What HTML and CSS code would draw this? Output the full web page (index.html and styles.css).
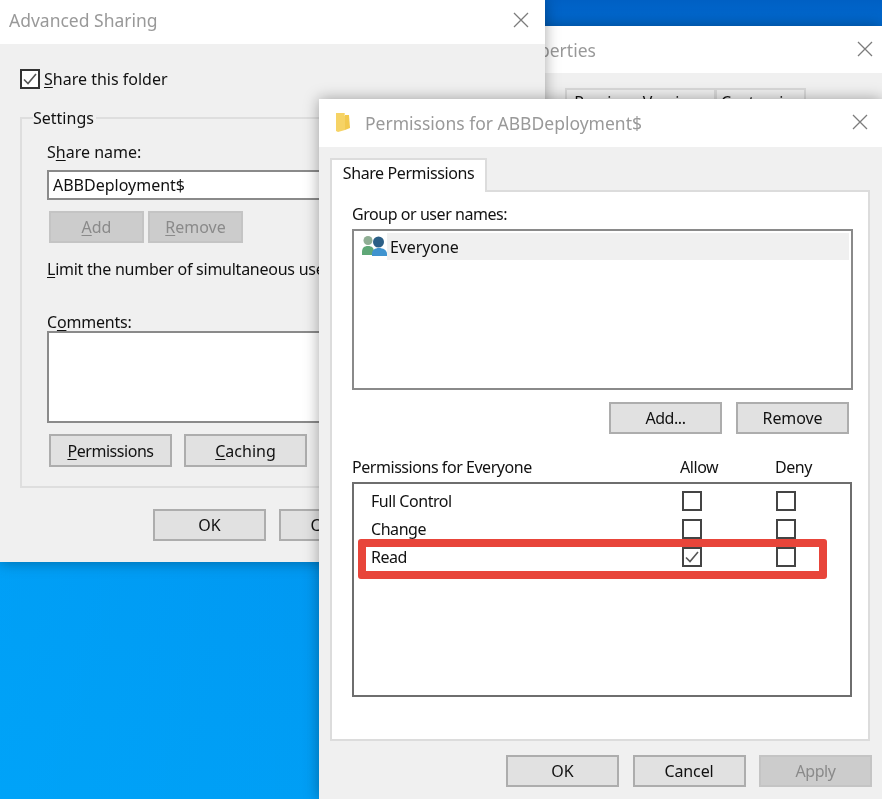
FILE: index.html
```html
<!DOCTYPE html>
<html lang="en">
<head>
<meta charset="utf-8">
<title>Permissions for ABBDeployment$</title>
<link rel="stylesheet" href="styles.css">
</head>
<body>
<main class="desktop">

  <section class="window props">
    <header class="titlebar props-bar">
      <span class="title props-title">ABBDeployment Properties</span>
      <svg class="close" viewBox="0 0 16 16"><path d="M1 1 15 15M15 1 1 15"/></svg>
    </header>
    <div class="props-tabs">
      <span class="props-tab prev">Previous Versions</span>
      <span class="props-tab cust">Customize</span>
    </div>
  </section>

  <section class="window adv">
    <header class="titlebar adv-bar">
      <span class="title">Advanced Sharing</span>
      <svg class="close" viewBox="0 0 16 16"><path d="M1 1 15 15M15 1 1 15"/></svg>
    </header>
    <div class="adv-body">
      <label class="share-row">
        <span class="check dark"><svg viewBox="0 0 20 20"><path d="M4 10.5 8 14.5 16 5"/></svg></span>
        <span><u>S</u>hare this folder</span>
      </label>
      <fieldset class="group">
        <legend>Settings</legend>
        <div class="text-line">S<u>h</u>are name:</div>
        <div class="input">ABBDeployment$</div>
        <div class="btn-row small">
          <span class="btn off"><u>A</u>dd</span>
          <span class="btn off"><u>R</u>emove</span>
        </div>
        <div class="text-line limit"><u>L</u>imit the number of simultaneous users to:</div>
        <div class="text-line comments-label">C<u>o</u>mments:</div>
        <div class="comments"></div>
        <div class="btn-row wide">
          <span class="btn tight"><u>P</u>ermissions</span>
          <span class="btn"><u>C</u>aching</span>
        </div>
      </fieldset>
      <div class="btn-row adv-foot">
        <span class="btn">OK</span>
        <span class="btn">Cancel</span>
      </div>
    </div>
  </section>

  <section class="window perm">
    <header class="titlebar perm-bar">
      <svg class="folder" viewBox="0 0 14 20">
        <path fill="#f6d365" d="M0 1h8l1 2v15l-7 2-2-1z"/>
        <path fill="#fbe08c" d="M8 1h1v3h-1z"/>
        <path fill="#f2c94f" d="M9 3h4l1 13-5 2z"/>
      </svg>
      <span class="title">Permissions for ABBDeployment$</span>
      <svg class="close" viewBox="0 0 16 16"><path d="M1 1 15 15M15 1 1 15"/></svg>
    </header>
    <div class="perm-body">
      <div class="tab">Share Permissions</div>
      <div class="panel">
        <div class="text-line tight">Group or user names:</div>
        <div class="users">
          <div class="user-row">
            <svg class="people" viewBox="0 0 26 24">
              <circle cx="7" cy="5.5" r="4.5" fill="#8fae94"/>
              <path fill="#5fa777" d="M1 20v-3c0-4 2-6 6-6s6 2 6 6v3z"/>
              <circle cx="17.5" cy="7" r="5.5" fill="#2c5f86"/>
              <path fill="#3f93cf" d="M11 21v-2c0-4 3-6 7-6s8 2 8 6v2z"/>
            </svg>
            <span class="user-name plain">Everyone</span>
          </div>
        </div>
        <div class="btn-row user-btns">
          <span class="btn tight">Add...</span>
          <span class="btn plain">Remove</span>
        </div>
        <div class="perm-head tight">
          <span class="perm-head-name">Permissions for Everyone</span>
          <span class="perm-head-allow">Allow</span>
          <span>Deny</span>
        </div>
        <div class="perm-list">
          <div class="perm-row"><span class="tight">Full Control</span><span class="check"></span><span class="check"></span></div>
          <div class="perm-row"><span class="tight">Change</span><span class="check"></span><span class="check"></span></div>
          <div class="perm-row"><span class="tight">Read</span><span class="check"><svg viewBox="0 0 20 20"><path d="M4 10.5 8 14.5 16 5"/></svg></span><span class="check"></span></div>
          <div class="callout"></div>
        </div>
      </div>
      <div class="btn-row perm-foot">
        <span class="btn">OK</span>
        <span class="btn plain">Cancel</span>
        <span class="btn off tight">Apply</span>
      </div>
    </div>
  </section>

</main>
</body>
</html>
```

FILE: styles.css
```css
* { box-sizing: border-box; }
html, body { margin: 0; height: 100%; overflow: hidden; }
body { font: 16px/22px "Noto Sans", "Open Sans", sans-serif; color: #111; }
u { text-underline-offset: 2px; text-decoration-thickness: 1px; }

.desktop {
  position: relative;
  width: 882px;
  height: 799px;
  overflow: hidden;
  filter: blur(0.55px);
  background:
    linear-gradient(90deg, rgba(0, 175, 255, .3), rgba(0, 175, 255, 0) 330px),
    linear-gradient(180deg, #0060c4 0, #006ad0 26px, #0098f2 563px, #009ef5 799px);
}

.window { position: absolute; background: #f0f0f0; box-shadow: 0 0 14px rgba(0, 0, 0, .35); }
.titlebar { position: relative; display: flex; align-items: center; background: #fff; }
.title { color: #999; font-size: 17.5px; }
.close { position: absolute; width: 16px; height: 16px; fill: none; stroke: #7c7c7c; stroke-width: 1.3; }

/* Properties window, mostly hidden */
.props { left: 300px; top: 26px; width: 582px; height: 200px; }
.props-bar { height: 47px; padding-left: 72px; }
.props-title { white-space: nowrap; }
.props-bar .close { left: 557px; top: 15px; }
.props-tabs { display: flex; padding: 15px 0 0 265px; }
.props-tab { height: 40px; padding-top: 1px; border: 2px solid #d9d9d9; border-bottom: 0; text-align: center; }
.prev { width: 151px; }
.cust { width: 91px; margin-left: -1px; }

/* Advanced Sharing */
.adv { left: 0; top: 0; width: 545px; height: 562px; }
.adv-bar { height: 44px; padding: 0 0 4px 9px; }
.adv-bar .close { left: 513px; top: 12px; }
.adv-body { padding: 25px 20px 0; }
.share-row { display: flex; align-items: center; gap: 4px; height: 20px; margin-bottom: 18px; }
.group { margin: 0; padding: 12px 0 20px 25px; height: 381px; border: 2px solid #dedede; }
.group legend { margin-left: -14px; padding: 0 2px 0 0; line-height: 22px; }
.text-line { white-space: nowrap; }
.input {
  width: 470px; height: 30px; margin-top: 7px; padding-left: 4px;
  border: 2px solid #8a8a8a; background: #fff; line-height: 26px;
}
.btn-row { display: flex; }
.btn {
  display: flex; align-items: center; justify-content: center;
  width: 113px; height: 32px;
  background: #e1e1e1; border: 2px solid #adadad; color: #111;
}
.btn.off { background: #cccccc; border-color: #c4c4c4; color: #8a8a8a; }
.small { gap: 4px; margin: 11px 0 0 2px; }
.small .btn { width: 95px; }
.limit { margin-top: 15px; letter-spacing: -.25px; }
.comments-label { margin-top: 32px; line-height: 20px; letter-spacing: -.2px; }
.comments { width: 470px; height: 92px; margin-top: -1px; border: 2px solid #8a8a8a; background: #fff; }
.wide { gap: 12px; margin: 11px 0 0 2px; }
.wide .btn { width: 123px; height: 33px; }
.adv-foot { gap: 13px; margin: 21px 0 0 133px; }

/* Permissions */
.perm { left: 319px; top: 99px; width: 563px; height: 700px; }
.perm-bar { height: 48px; padding: 0 0 0 46px; }
.folder { position: absolute; left: 17px; top: 13px; width: 14px; height: 20px; }
.perm-bar .close { left: 533px; top: 15px; }
.perm-body { padding: 11px 10px 0 11px; }
.tab {
  position: relative; z-index: 1;
  width: 157px; height: 34px; margin-bottom: -2px;
  border: 2px solid #dcdcdc; border-bottom: 0; background: #fff;
  text-align: center; line-height: 27px; letter-spacing: -.4px;
}
.panel { width: 540px; height: 551px; padding: 11px 16px 0 20px; background: #fff; border: 2px solid #dcdcdc; }
.tight { letter-spacing: -.45px; }
.plain { letter-spacing: -.1px; }
.users { width: 501px; height: 161px; margin-top: 4px; padding: 2px; border: 2px solid #8a8a8a; }
.user-row { display: flex; align-items: center; height: 27px; padding-left: 5px; }
.people { flex: none; width: 26px; height: 24px; }
.user-name { flex: 1; align-self: stretch; display: flex; align-items: center; padding-left: 3px; background: #f0f0f0; }
.user-btns { justify-content: flex-end; gap: 14px; margin: 12px 3px 0 0; }
.perm-head { display: flex; margin-top: 22px; white-space: nowrap; }
.perm-head-name { width: 328px; }
.perm-head-allow { width: 95px; }
.perm-list { position: relative; width: 500px; height: 215px; margin-top: 4px; padding: 3px 0 0 17px; border: 2px solid #6e6e6e; }
.perm-row { display: grid; grid-template-columns: 311px 94px 20px; align-items: center; height: 28px; }
.check { display: block; width: 20px; height: 20px; border: 2px solid #444; background: #fff; position: relative; }
.check svg { position: absolute; left: -2px; top: -2px; width: 20px; height: 20px; fill: none; stroke: #555; stroke-width: 1.6; }
.check.dark { border-color: #333; }
.callout {
  position: absolute; left: 4px; top: 55px; width: 469px; height: 40px;
  border: 8px solid #e8453a; border-radius: 3px;
}
.perm-foot { gap: 13.5px; justify-content: flex-end; margin-top: 14px; width: 542px; }
```
